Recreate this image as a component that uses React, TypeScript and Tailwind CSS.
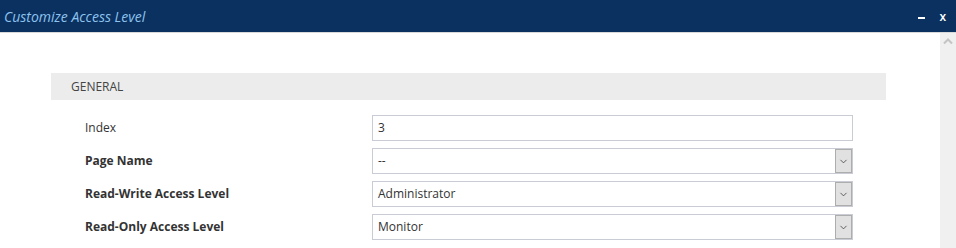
import { ChevronDown } from 'lucide-react';

const font = { fontFamily: '"Open Sans", "Liberation Sans", sans-serif' };

interface FieldRowProps {
  label: string;
  value: string;
  bold?: boolean;
  select?: boolean;
}

function FieldRow({ label, value, bold = false, select = false }: FieldRowProps) {
  return (
    <div className="flex items-center h-[26px]">
      <div className={`w-[321px] pl-[34px] text-[12px] text-[#333] ${bold ? 'font-bold' : ''}`}>{label}</div>
      <div className="flex w-[481px] h-[26px] border border-[#c9ccd4] bg-white">
        <div className="flex-1 flex items-center pl-[5px] text-[12px] text-[#333]">{value}</div>
        {select && (
          <div className="w-[17px] h-full flex items-center justify-center bg-[#e1e1e1] border border-[#adadad]">
            <ChevronDown className="w-[11px] h-[11px] text-[#444]" strokeWidth={1.8} />
          </div>
        )}
      </div>
    </div>
  );
}

export default function App() {
  return (
    <div className="w-[956px] h-[248px] bg-white overflow-hidden flex flex-col" style={font}>
      <div className="h-[32px] bg-[#0a3160] flex items-center justify-between pl-[4px] pr-[10px] shrink-0">
        <span className="italic text-[14px] text-[#8ec3ee]">Customize Access Level</span>
        <div className="flex items-center gap-[14px]">
          <span className="block w-[7px] h-[2px] bg-white mt-[3px]" />
          <span className="text-white text-[12px] font-semibold leading-none mt-[2px]">x</span>
        </div>
      </div>
      <div className="h-px bg-[#d9d9d9] shrink-0" />
      <div className="flex flex-1">
        <div className="flex-1 pt-[40px] pl-[51px]">
          <div className="w-[835px] h-[27px] bg-[#ececec] flex items-center pl-[20px] text-[12px] text-[#444]">GENERAL</div>
          <div className="flex flex-col gap-[7px] mt-[15px]">
            <FieldRow label="Index" value="3" />
            <FieldRow label="Page Name" value="--" bold select />
            <FieldRow label="Read-Write Access Level" value="Administrator" bold select />
            <FieldRow label="Read-Only Access Level" value="Monitor" bold select />
          </div>
        </div>
        <div className="w-[16px] bg-[#f0f0f0] flex justify-center pt-[4px]">
          <svg width="10" height="8" viewBox="0 0 10 8" fill="none">
            <path d="M1 6.5 L5 2.5 L9 6.5" stroke="#c4c4c4" strokeWidth="2" />
          </svg>
        </div>
      </div>
    </div>
  );
}
